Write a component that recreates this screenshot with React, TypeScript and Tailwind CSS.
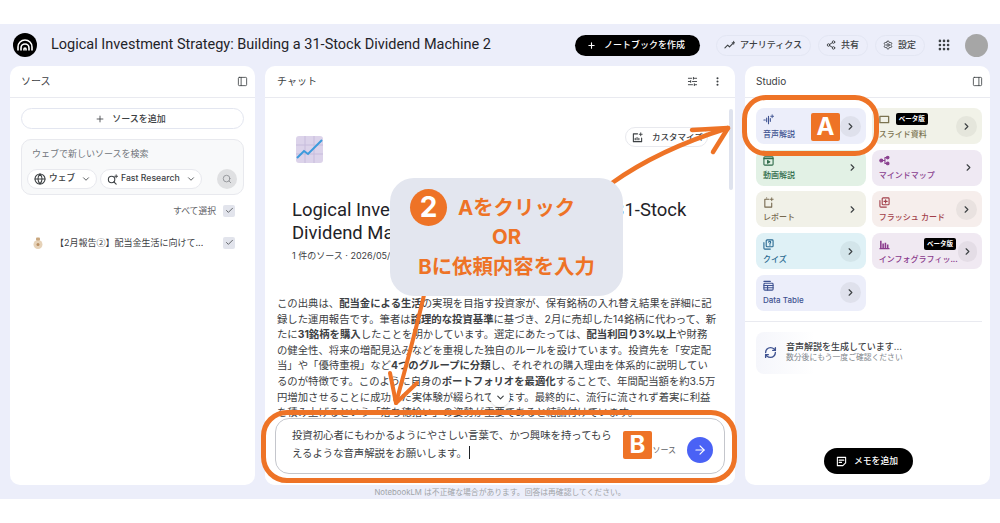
import { ArrowRight, Check, ChevronDown, ChevronRight, EllipsisVertical, Globe, Grip, PanelLeft, PanelRight, Plus, RefreshCw, Search, Settings, Share2, SlidersHorizontal } from 'lucide-react';
import type { ReactNode } from 'react';

const jp = "font-['Inter','Noto_Sans_CJK_JP',sans-serif]";

const Glyph = ({ children, size = 11 }: { children: ReactNode; size?: number }) => (
    <svg width={size} height={size} viewBox="0 0 12 12" fill="none" stroke="currentColor" strokeWidth="1.2" strokeLinecap="round" strokeLinejoin="round">
        {children}
    </svg>
);

const Sparkle = ({ x, y }: { x: number; y: number }) => (
    <path d={`M${x} ${y - 1.6}v3.2M${x - 1.6} ${y}h3.2`} strokeWidth="1" />
);

const HeaderPill = ({ icon, label }: { icon: ReactNode; label: string }) => (
    <div className="flex h-[21px] items-center gap-[5px] rounded-full border border-[#e3e6f3] pl-[7px] pr-[8px] text-[9px] font-medium text-[#3c4043]">
        {icon}
        <span>{label}</span>
    </div>
);

interface Tile {
    label: string;
    bg: string;
    text: string;
    icon: ReactNode;
    circle?: string;
    beta?: 'top' | 'side';
}

const tiles: Tile[] = [
    {
        label: '音声解説', bg: 'bg-[#eceefa]', text: 'text-[#3f5391]', circle: 'bg-[#dfe1ec]',
        icon: <Glyph><path d="M1 6.5h1.5M4 4.5v4M6 2.5v8M8 5v3" /><Sparkle x={10} y={2.5} /></Glyph>,
    },
    {
        label: 'スライド資料', bg: 'bg-[#f1f2e8]', text: 'text-[#7b7350]', circle: 'bg-[#e5e6dc]', beta: 'top',
        icon: <Glyph><rect x="1" y="2.5" width="9.5" height="7" strokeWidth="1.4" /></Glyph>,
    },
    {
        label: '動画解説', bg: 'bg-[#e2f1e5]', text: 'text-[#2f6b4a]',
        icon: <Glyph><rect x="1" y="2" width="10" height="9" rx="1" /><path d="M1 4h10" /><path d="M5 6v3l2.5-1.5z" fill="currentColor" /></Glyph>,
    },
    {
        label: 'マインドマップ', bg: 'bg-[#efe9f3]', text: 'text-[#8a3f8f]',
        icon: <Glyph><circle cx="2.5" cy="6" r="1.6" fill="currentColor" /><circle cx="9.5" cy="2.8" r="1.4" fill="currentColor" /><circle cx="9.5" cy="9.2" r="1.4" fill="currentColor" /><path d="M4 6h2.5M6.5 2.8v6.4h2M6.5 2.8h2" /></Glyph>,
    },
    {
        label: 'レポート', bg: 'bg-[#f1f1e8]', text: 'text-[#77694f]',
        icon: <Glyph><path d="M6.5 2.5H2v8.5h7.5V6.5" /><path d="M4 1v0" /><Sparkle x={9.5} y={2.5} /></Glyph>,
    },
    {
        label: 'フラッシュ カード', bg: 'bg-[#f6eeec]', text: 'text-[#a23f4a]', circle: 'bg-[#e9e2e0]',
        icon: <Glyph><rect x="3.5" y="1" width="7.5" height="7.5" rx="1" /><path d="M1 4v6a1 1 0 0 0 1 1h6" /><path d="M7.2 3v3.5M5.5 4.8h3.4" /></Glyph>,
    },
    {
        label: 'クイズ', bg: 'bg-[#dff1f6]', text: 'text-[#2a6a92]', circle: 'bg-[#d3e5ea]',
        icon: <Glyph><rect x="3.5" y="1" width="7.5" height="7.5" rx="1" /><path d="M1 4v6a1 1 0 0 0 1 1h6" /><path d="M6.2 3.4a1.1 1.1 0 1 1 1.4 1.2v.8M7.6 6.6v.1" /></Glyph>,
    },
    {
        label: 'インフォグラフィッ...', bg: 'bg-[#f0e9f2]', text: 'text-[#8a3a8c]', circle: 'bg-[#e4dde6]', beta: 'side',
        icon: <Glyph><path d="M2 2v8M4.5 5v5M7 4v6M9.5 6v4" strokeWidth="1.7" strokeLinecap="butt" /><path d="M1 10.5h10" /></Glyph>,
    },
    {
        label: 'Data Table', bg: 'bg-[#eceefa]', text: 'text-[#3f5391]', circle: 'bg-[#dfe1ec]',
        icon: <Glyph><path d="M1 1.5h7" /><rect x="1" y="3.5" width="10" height="7.5" rx="1" /><path d="M1 6h10M1 8.5h10M5 6v5" /></Glyph>,
    },
];

const StudioTile = ({ tile }: { tile: Tile }) => (
    <div className={`relative flex h-[36px] items-center justify-between rounded-[8px] pl-[7px] pr-[5px] ${tile.bg}`}>
        <div className={`flex flex-col gap-[4px] ${tile.text}`}>
            {tile.icon}
            <span className="whitespace-nowrap text-[8px] font-medium leading-[10px]">{tile.label}</span>
        </div>
        {tile.circle ? (
            <div className={`flex h-[21px] w-[21px] items-center justify-center rounded-full ${tile.circle}`}>
                <ChevronRight size={11} className="text-[#3c4043]" strokeWidth={2.5} />
            </div>
        ) : (
            <ChevronRight size={11} className="mr-[3px] text-[#3c4043]" strokeWidth={2.5} />
        )}
        {tile.beta === 'top' && (
            <span className="absolute left-[24px] top-[5px] rounded-[2px] bg-black px-[3px] text-[6.5px] font-bold leading-[12px] text-white">ベータ版</span>
        )}
        {tile.beta === 'side' && (
            <span className="absolute right-[26px] top-[5px] rounded-[2px] bg-black px-[3px] text-[6.5px] font-bold leading-[12px] text-white">ベータ版</span>
        )}
    </div>
);

const Badge = ({ letter, className }: { letter: string; className: string }) => (
    <div className={`absolute flex h-[28px] w-[29px] items-center justify-center rounded-[2px] bg-[#ee7326] text-[24px] font-bold text-white ${className}`}>
        {letter}
    </div>
);

export default function App() {
    return (
        <div className={`relative h-[523px] w-[1000px] overflow-hidden bg-white pt-[24px] ${jp}`}>
            <div className="flex h-[475px] flex-col bg-[#eceefa] px-[10px]">
                {/* Header */}
                <div className="flex h-[42px] shrink-0 items-center">
                    <div className="ml-[3px] flex h-[24px] w-[24px] items-center justify-center rounded-full bg-black">
                        <svg width="16" height="12" viewBox="0 0 16 12" fill="none" stroke="white" strokeWidth="1.6" strokeLinecap="round">
                            <path d="M1 11V8a7 7 0 0 1 14 0v3" />
                            <path d="M4 11V9a4 4 0 0 1 8 0v2" />
                            <path d="M7 11v-1a1 1 0 0 1 2 0v1" />
                        </svg>
                    </div>
                    <h1 className="ml-[14px] whitespace-nowrap font-['Roboto',sans-serif] text-[14.5px] text-[#1f2328]">Logical Investment Strategy: Building a 31-Stock Dividend Machine 2</h1>
                    <div className="ml-auto flex h-[21px] items-center gap-[8px] rounded-full bg-black pl-[12px] pr-[15px] text-[9px] font-medium text-white">
                        <Plus size={9} strokeWidth={3} />
                        <span>ノートブックを作成</span>
                    </div>
                    <div className="ml-[16px] flex items-center gap-[7px]">
                        <HeaderPill
                            icon={<Glyph><path d="M1 8.5l3-3 2 2 3.5-3.5" /><Sparkle x={10.5} y={3} /></Glyph>}
                            label="アナリティクス"
                        />
                        <HeaderPill icon={<Share2 size={10} strokeWidth={2.2} />} label="共有" />
                        <HeaderPill icon={<Settings size={10} strokeWidth={2.2} />} label="設定" />
                    </div>
                    <Grip size={14} className="ml-[12px] text-[#3c4043]" strokeWidth={2.5} />
                    <div className="ml-[14px] h-[23px] w-[23px] rounded-full bg-[#a6a6a6]" />
                    <div className="w-[2px]" />
                </div>

                {/* Panels */}
                <div className="flex h-[419px] gap-[10px]">
                    {/* ソース */}
                    <section className="flex w-[245px] flex-col rounded-[10px] bg-white">
                        <div className="flex h-[32px] shrink-0 items-center justify-between border-b border-[#e9eaf0] pl-[11px] pr-[7px] text-[10px] text-[#3c4043]">
                            <span>ソース</span>
                            <PanelLeft size={11} strokeWidth={1.8} />
                        </div>
                        <div className="px-[11px] pt-[10px]">
                            <div className="flex h-[21px] items-center justify-center gap-[7px] rounded-full border border-[#e3e6f0] pr-[4px] text-[9px] font-medium text-[#3c4043]">
                                <Plus size={10} />
                                <span>ソースを追加</span>
                            </div>
                            <div className="mt-[10px] h-[56px] rounded-[10px] border border-[#e8e9ee] bg-[#f8f9fa] px-[5px] pt-[7px]">
                                <div className="pl-[5px] text-[9px] leading-[14px] text-[#70757a]">ウェブで新しいソースを検索</div>
                                <div className="mt-[8px] flex items-center gap-[3px]">
                                    <div className="flex h-[20px] w-[70px] items-center gap-[3px] rounded-full border border-[#e8e9ee] bg-white pl-[6px] text-[8.7px] font-medium text-[#3c4043]">
                                        <Globe size={12} strokeWidth={2.2} />
                                        <span>ウェブ</span>
                                        <ChevronDown size={10} className="ml-[3px]" />
                                    </div>
                                    <div className="flex h-[20px] w-[102px] items-center gap-[3px] rounded-full border border-[#e8e9ee] bg-white pl-[6px] text-[8.7px] font-medium text-[#3c4043]">
                                        <Glyph><circle cx="5" cy="6" r="3.5" /><path d="M7.5 8.5L10 11" /><Sparkle x={10} y={2.5} /></Glyph>
                                        <span>Fast Research</span>
                                        <ChevronDown size={10} className="ml-[3px]" />
                                    </div>
                                    <div className="ml-auto mr-[1px] flex h-[20px] w-[20px] items-center justify-center rounded-full bg-[#dfe0e2]">
                                        <Search size={10} className="text-[#8a8d91]" />
                                    </div>
                                </div>
                            </div>
                            <div className="mt-[9px] flex items-center justify-end gap-[7px] pr-[9px] text-[8.8px] text-[#5f6368]">
                                <span>すべて選択</span>
                                <div className="flex h-[12px] w-[12px] items-center justify-center rounded-[2px] bg-[#e2e4ec]">
                                    <Check size={9} className="text-[#3c4043]" />
                                </div>
                            </div>
                            <div className="mt-[19px] flex items-center pr-[9px] text-[9px] text-[#3c4043]">
                                <svg width="10" height="12" viewBox="0 0 10 12" className="ml-[12px]">
                                    <ellipse cx="5" cy="7.5" rx="4.5" ry="4.5" fill="#e6d2b8" />
                                    <rect x="3" y="0.5" width="4" height="3" rx="1" fill="#c9a77e" />
                                    <circle cx="5" cy="7.5" r="1.5" fill="#b98f63" />
                                </svg>
                                <span className="ml-[12px] truncate">【2月報告<span className="font-['Noto_Sans_CJK_JP',sans-serif]">②</span>】配当金生活に向けて...</span>
                                <div className="ml-auto flex h-[12px] w-[12px] items-center justify-center rounded-[2px] bg-[#e2e4ec]">
                                    <Check size={9} className="text-[#3c4043]" />
                                </div>
                            </div>
                        </div>
                    </section>

                    {/* チャット */}
                    <section className="relative flex w-[470px] flex-col overflow-hidden rounded-[10px] bg-white">
                        <div className="flex h-[32px] shrink-0 items-center justify-between border-b border-[#e9eaf0] px-[12px] text-[10px] text-[#3c4043]">
                            <span>チャット</span>
                            <div className="flex items-center gap-[14px]">
                                <SlidersHorizontal size={11} />
                                <EllipsisVertical size={11} strokeWidth={2.5} />
                            </div>
                        </div>
                        <div className="px-[12px] pt-[38px]">
                            <svg width="27" height="27" viewBox="0 0 27 27" className="ml-[19px]">
                                <rect width="27" height="27" rx="3" fill="#dcd3ea" />
                                <path d="M9 0v27M18 0v27M0 9h27M0 18h27" stroke="#c7bcdc" strokeWidth="1" />
                                <path d="M1 22l7-7 4 3L26 4" fill="none" stroke="#3d9bdc" strokeWidth="2" />
                            </svg>
                            <h2 className="ml-[15px] mt-[36px] w-[420px] font-['Roboto',sans-serif] text-[18.45px] leading-[23px] text-[#1f2328]">Logical Investment Strategy: Building a 31-Stock Dividend Machine 2</h2>
                            <p className="ml-[15px] mt-[4px] text-[9px] leading-[14px] text-[#3c4043]">1 件のソース · 2026/05/12</p>
                            <p className="mt-[33px] whitespace-nowrap text-[10.37px] leading-[15.6px] text-[#3c4043]">
                                この出典は、<b>配当金による生活</b>の実現を目指す投資家が、保有銘柄の入れ替え結果を詳細に記<br />
                                録した運用報告です。筆者は<b>論理的な投資基準</b>に基づき、2月に売却した14銘柄に代わって、新<br />
                                たに<b>31銘柄を購入</b>したことを明かしています。選定にあたっては、<b>配当利回り3%以上</b>や財務<br />
                                の健全性、将来の増配見込みなどを重視した独自のルールを設けています。投資先を「安定配<br />
                                当」や「優待重視」など<b>4つのグループに分類</b>し、それぞれの購入理由を体系的に説明してい<br />
                                るのが特徴です。このように自身の<b>ポートフォリオを最適化</b>することで、年間配当額を約3.5万<br />
                                円増加させることに成功した実体験が綴られています。最終的に、流行に流されず着実に利益<br />
                                を積み上げるという「落ち穂拾い」の姿勢が重要であると結論付けています。
                            </p>
                        </div>
                        {/* scrollbar */}
                        <div className="absolute right-[2px] top-[43px] h-[81px] w-[4px] rounded-full bg-[#dfe3ee]" />
                        <div className="absolute left-[360px] top-[61px] flex h-[20px] w-[83px] items-center gap-[9px] rounded-full border border-[#e8e9ee] bg-white pl-[6px] text-[8.5px] font-medium text-[#3c4043]">
                            <Glyph><path d="M6 2H1.5v8.5h9V6.5" /><path d="M3.5 8.5V7M5.5 8.5V6M7.5 8.5V7" /><Sparkle x={9.5} y={2.5} /></Glyph>
                            <span className="whitespace-nowrap">カスタマイズ</span>
                        </div>
                        <div className="absolute left-[225px] top-[321px] flex h-[20px] w-[20px] items-center justify-center rounded-full bg-white shadow-sm">
                            <ChevronDown size={11} strokeWidth={2.5} className="text-[#3c4043]" />
                        </div>
                        {/* input */}
                        <div className="absolute inset-x-0 bottom-0 h-[67px] bg-white" />
                        <div className="absolute bottom-[11px] left-[10px] flex h-[56px] w-[450px] items-center rounded-[14px] border border-[#c4c6cc] bg-white pl-[16px] pr-[11px]">
                            <p className="mb-[2px] w-[330px] whitespace-nowrap text-[10.37px] leading-[16px] text-[#3c4043]">
                                投資初心者にもわかるようにやさしい言葉で、かつ興味を持ってもら<br />
                                えるような音声解説をお願いします。<span className="ml-[2px] inline-block h-[13px] w-px translate-y-[2px] bg-[#1f2328]" />
                            </p>
                            <span className="ml-auto mr-[11px] mt-[8px] text-[8px] text-[#5f6368]">1 ソース</span>
                            <div className="mt-[8px] flex h-[26px] w-[26px] items-center justify-center rounded-full bg-[#4a62f5]">
                                <ArrowRight size={14} className="text-white" />
                            </div>
                        </div>
                    </section>

                    {/* Studio */}
                    <section className="relative flex w-[245px] flex-col rounded-[10px] bg-white">
                        <div className="flex h-[32px] shrink-0 items-center justify-between border-b border-[#e9eaf0] pl-[11px] pr-[7px] text-[10px] text-[#3c4043]">
                            <span>Studio</span>
                            <PanelRight size={11} strokeWidth={1.8} />
                        </div>
                        <div className="grid grid-cols-2 gap-x-[5.7px] gap-y-[5.7px] pl-[11px] pr-[8px] pt-[10px]">
                            {tiles.map((tile) => (
                                <StudioTile key={tile.label} tile={tile} />
                            ))}
                        </div>
                        <div className="mr-[8px] mt-[10px] border-t border-[#e9eaf0]" />
                        <div className="ml-[11px] mt-[10px] flex h-[42px] items-center rounded-[8px] bg-gradient-to-r from-[#f5f6fb] to-white to-[25%]">
                            <RefreshCw size={13} className="ml-[8px] text-[#3f5391]" strokeWidth={2.5} />
                            <div className="ml-[9px]">
                                <div className="whitespace-nowrap text-[9px] font-medium leading-[10px] text-[#3c4043]">音声解説を生成しています...</div>
                                <div className="whitespace-nowrap text-[7.8px] leading-[11px] text-[#80868b]">数分後にもう一度ご確認ください</div>
                            </div>
                        </div>
                        <div className="absolute bottom-[11px] left-[79px] flex h-[26px] w-[89px] items-center gap-[7px] rounded-full bg-black pl-[12px] text-[8.8px] font-medium text-white">
                            <Glyph><path d="M1.5 1.5h9v6l-3 3h-6z" /><path d="M3.5 4.5h5M3.5 7h2.5" /></Glyph>
                            <span>メモを追加</span>
                        </div>
                    </section>
                </div>

                <div className="flex h-[14px] items-center justify-center pt-[1px] text-[7.8px] text-[#a0a4a8]">
                    NotebookLM は不正確な場合があります。回答は再確認してください。
                </div>
            </div>

            {/* Annotations */}
            <div className="absolute left-[742px] top-[95px] h-[61px] w-[137px] rounded-[24px] border-[5px] border-[#ee7326]" />
            <Badge letter="A" className="left-[811px] top-[113px]" />
            <div className="absolute left-[261px] top-[410px] h-[73px] w-[476px] rounded-[26px] border-[5px] border-[#ee7326]" />
            <Badge letter="B" className="left-[623px] top-[431px]" />

            <svg className="absolute inset-0" width="1000" height="523" viewBox="0 0 1000 523" fill="none" stroke="#ee7326" strokeLinecap="round" strokeLinejoin="round">
                <g strokeWidth="4.5">
                    <path d="M612 183C640 163 680 143 728 128" />
                    <path d="M692 130L728 128L713 152" />
                </g>
                <g strokeWidth="4">
                    <path d="M424 295C416 330 405 370 396 403" />
                    <path d="M390 373L396 403L417 383" />
                </g>
            </svg>

            <div className="absolute left-[390px] top-[178px] flex h-[118px] w-[233px] flex-col items-center justify-center rounded-[24px] bg-[#e3e6ef] text-[20.4px] font-bold leading-[29.5px] text-[#ee7326]">
                <div className="flex h-[29.5px] w-full items-center pl-[20px]">
                    <div className="flex h-[37px] w-[37px] shrink-0 items-center justify-center rounded-full bg-[#ee7326] text-[28px] text-white">2</div>
                    <span className="ml-[11px]">Aをクリック</span>
                </div>
                <div>OR</div>
                <div>Bに依頼内容を入力</div>
            </div>
        </div>
    );
}
